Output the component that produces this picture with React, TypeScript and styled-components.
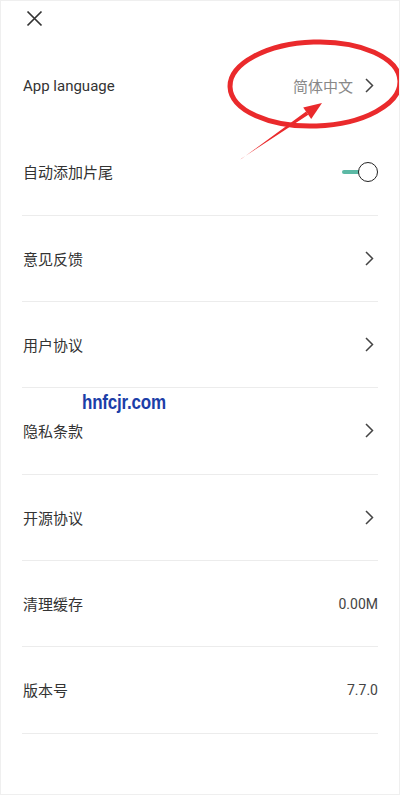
import styled, { createGlobalStyle } from 'styled-components';

const GlobalStyle = createGlobalStyle`
  html, body {
    margin: 0;
    padding: 0;
    background: #ffffff;
  }
  * {
    box-sizing: border-box;
  }
`;

const Page = styled.div`
  position: relative;
  width: 400px;
  height: 795px;
  background: #ffffff;
  border: 1px solid #efefef;
  overflow: hidden;
  font-family: Roboto, 'Noto Sans CJK SC', sans-serif;
`;

const TopBar = styled.div`
  height: 42px;
  display: flex;
  align-items: center;
  padding-left: 24px;
`;

const CloseButton = styled.div`
  width: 18px;
  height: 18px;
  display: flex;
  align-items: center;
  justify-content: center;
  margin-top: -8px;
`;

const List = styled.div`
  display: flex;
  flex-direction: column;
  padding: 0 21px;
`;

const Row = styled.div<{ $divider?: boolean }>`
  height: 86.33px;
  display: flex;
  align-items: center;
  justify-content: space-between;
  border-bottom: 1px solid ${(p) => (p.$divider ? '#ececec' : 'transparent')};
`;

const Label = styled.div`
  font-size: 15px;
  color: #333333;
  padding-left: 1px;
`;

const Right = styled.div`
  display: flex;
  align-items: center;
  gap: 9px;
`;

const Value = styled.div<{ $muted?: boolean }>`
  font-size: ${(p) => (p.$muted ? '15px' : '14px')};
  color: ${(p) => (p.$muted ? '#888888' : '#444444')};
`;

const Chevron = styled.div`
  width: 16px;
  display: flex;
  justify-content: flex-end;
  padding-right: 4px;
`;

const Toggle = styled.div`
  position: relative;
  width: 36px;
  height: 20px;
  display: flex;
  align-items: center;
`;

const Track = styled.div`
  width: 22px;
  height: 4px;
  border-radius: 2px;
  background: #5cb9a5;
`;

const Knob = styled.div`
  position: absolute;
  right: 0;
  top: 0;
  width: 20px;
  height: 20px;
  border-radius: 50%;
  background: #ffffff;
  border: 1.6px solid #222222;
`;

const Annotation = styled.svg`
  position: absolute;
  left: 0;
  top: 0;
  pointer-events: none;
`;

const Watermark = styled.div`
  position: absolute;
  left: 81px;
  top: 390px;
  font-family: 'Liberation Sans', Arial, sans-serif;
  font-weight: 700;
  font-size: 17px;
  color: #1c3ea8;
  transform: scaleY(1.2);
  transform-origin: left top;
  letter-spacing: -0.2px;
`;

const ChevronIcon = () => (
  <svg width="9" height="15" viewBox="0 0 9 15">
    <path d="M1 1 L7.5 7.5 L1 14" fill="none" stroke="#444" strokeWidth="1.5" />
  </svg>
);

const rows: { label: string; value?: string; chevron?: boolean }[] = [
  { label: '意见反馈', chevron: true },
  { label: '用户协议', chevron: true },
  { label: '隐私条款', chevron: true },
  { label: '开源协议', chevron: true },
  { label: '清理缓存', value: '0.00M' },
  { label: '版本号', value: '7.7.0' },
];

const App = () => {
  return (
    <>
      <GlobalStyle />
      <Page>
        <TopBar>
          <CloseButton>
            <svg width="17" height="17" viewBox="0 0 17 17">
              <path d="M1.5 1.5 L15.5 15.5 M15.5 1.5 L1.5 15.5" stroke="#333" strokeWidth="1.7" />
            </svg>
          </CloseButton>
        </TopBar>
        <List>
          <Row>
            <Label>App language</Label>
            <Right>
              <Value $muted>简体中文</Value>
              <Chevron>
                <ChevronIcon />
              </Chevron>
            </Right>
          </Row>
          <Row $divider>
            <Label>自动添加片尾</Label>
            <Toggle>
              <Track />
              <Knob />
            </Toggle>
          </Row>
          {rows.map((r) => (
            <Row $divider key={r.label}>
              <Label>{r.label}</Label>
              <Right>
                {r.value ? <Value>{r.value}</Value> : null}
                {r.chevron ? (
                  <Chevron>
                    <ChevronIcon />
                  </Chevron>
                ) : null}
              </Right>
            </Row>
          ))}
        </List>

        {/* red marker drawn over the screenshot */}
        <Annotation width="400" height="170" viewBox="0 0 400 170">
          <ellipse
            cx="314"
            cy="83"
            rx="85"
            ry="42"
            fill="none"
            stroke="#ea2a2c"
            strokeWidth="5"
            transform="rotate(-2 314 83)"
          />
          <polygon points="239.5,158.6 240.5,157.4 307.3,113.8 305.1,110.6" fill="#ea2a2c" />
          <polygon points="321,102 302.2,106.5 310.2,117.9" fill="#ea2a2c" />
        </Annotation>

        <Watermark>hnfcjr.com</Watermark>
      </Page>
    </>
  );
};

export default App;
